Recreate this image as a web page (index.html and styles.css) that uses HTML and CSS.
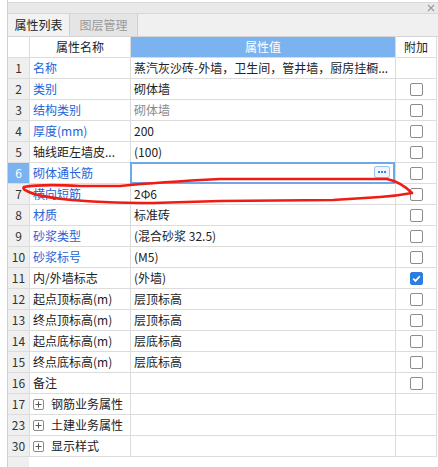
FILE: index.html
```html
<!DOCTYPE html>
<html lang="zh-CN">

<head>
  <meta charset="UTF-8">
  <meta name="viewport" content="width=device-width, initial-scale=1.0">
  <title>属性列表</title>
  <link rel="stylesheet" href="styles.css">
</head>

<body>

  <div class="panel">
    <!-- Title strip -->
    <div class="titlebar">
      <svg class="close" width="8" height="8" viewBox="0 0 8 8">
        <path d="M1 1 L7 7 M7 1 L1 7" stroke="#9a9a9a" stroke-width="1.1" fill="none" />
      </svg>
    </div>

    <!-- Tabs -->
    <div class="tabs">
      <div class="tab active">属性列表</div>
      <div class="tab second">图层管理</div>
    </div>

    <!-- Property grid -->
    <div class="grid-wrap">
      <table class="props">
        <colgroup>
          <col class="c-num">
          <col class="c-name">
          <col class="c-value">
          <col class="c-add">
        </colgroup>
        <thead>
          <tr>
            <th class="num head-num"></th>
            <th class="name-head">属性名称</th>
            <th class="value-head">属性值</th>
            <th class="add-head">附加</th>
          </tr>
        </thead>
        <tbody>
          <tr>
            <td class="num">1</td>
            <td class="key">名称</td>
            <td>蒸汽灰沙砖-外墙，卫生间，管井墙，厨房挂橱...</td>
            <td class="add"></td>
          </tr>
          <tr>
            <td class="num">2</td>
            <td class="key">类别</td>
            <td>砌体墙</td>
            <td class="add"><span class="box"></span></td>
          </tr>
          <tr>
            <td class="num">3</td>
            <td class="key">结构类别</td>
            <td class="muted">砌体墙</td>
            <td class="add"><span class="box"></span></td>
          </tr>
          <tr>
            <td class="num">4</td>
            <td class="key">厚度(mm)</td>
            <td>200</td>
            <td class="add"><span class="box"></span></td>
          </tr>
          <tr>
            <td class="num">5</td>
            <td>轴线距左墙皮...</td>
            <td>(100)</td>
            <td class="add"><span class="box"></span></td>
          </tr>
          <tr>
            <td class="num selected">6</td>
            <td class="key">砌体通长筋</td>
            <td class="editing">
              <span class="dots">
                <svg width="14" height="10" viewBox="0 0 14 10">
                  <rect x="3" y="4" width="2" height="2" fill="#3a84e0" />
                  <rect x="6" y="4" width="2" height="2" fill="#3a84e0" />
                  <rect x="9" y="4" width="2" height="2" fill="#3a84e0" />
                </svg>
              </span>
            </td>
            <td class="add"><span class="box"></span></td>
          </tr>
          <tr>
            <td class="num">7</td>
            <td class="key">横向短筋</td>
            <td>2Φ6</td>
            <td class="add"><span class="box"></span></td>
          </tr>
          <tr>
            <td class="num">8</td>
            <td class="key">材质</td>
            <td>标准砖</td>
            <td class="add"><span class="box"></span></td>
          </tr>
          <tr>
            <td class="num">9</td>
            <td class="key">砂浆类型</td>
            <td class="pre">(混合砂浆   32.5)</td>
            <td class="add"><span class="box"></span></td>
          </tr>
          <tr>
            <td class="num">10</td>
            <td class="key">砂浆标号</td>
            <td>(M5)</td>
            <td class="add"><span class="box"></span></td>
          </tr>
          <tr>
            <td class="num">11</td>
            <td>内/外墙标志</td>
            <td>(外墙)</td>
            <td class="add">
              <span class="box checked">
                <svg width="11" height="11" viewBox="0 0 11 11">
                  <path d="M2.2 5.6 L4.5 7.9 L8.8 3.2" stroke="#fff" stroke-width="1.7" fill="none" />
                </svg>
              </span>
            </td>
          </tr>
          <tr>
            <td class="num">12</td>
            <td>起点顶标高(m)</td>
            <td>层顶标高</td>
            <td class="add"><span class="box"></span></td>
          </tr>
          <tr>
            <td class="num">13</td>
            <td>终点顶标高(m)</td>
            <td>层顶标高</td>
            <td class="add"><span class="box"></span></td>
          </tr>
          <tr>
            <td class="num">14</td>
            <td>起点底标高(m)</td>
            <td>层底标高</td>
            <td class="add"><span class="box"></span></td>
          </tr>
          <tr>
            <td class="num">15</td>
            <td>终点底标高(m)</td>
            <td>层底标高</td>
            <td class="add"><span class="box"></span></td>
          </tr>
          <tr>
            <td class="num">16</td>
            <td>备注</td>
            <td></td>
            <td class="add"><span class="box"></span></td>
          </tr>
          <tr>
            <td class="num">17</td>
            <td class="group"><span class="expander"><svg width="9" height="9" viewBox="0 0 9 9"><path d="M4.5 1.5 V7.5 M1.5 4.5 H7.5" stroke="#555" stroke-width="1" fill="none" /></svg></span>钢筋业务属性</td>
            <td></td>
            <td class="add"></td>
          </tr>
          <tr>
            <td class="num">23</td>
            <td class="group"><span class="expander"><svg width="9" height="9" viewBox="0 0 9 9"><path d="M4.5 1.5 V7.5 M1.5 4.5 H7.5" stroke="#555" stroke-width="1" fill="none" /></svg></span>土建业务属性</td>
            <td></td>
            <td class="add"></td>
          </tr>
          <tr>
            <td class="num">30</td>
            <td class="group"><span class="expander"><svg width="9" height="9" viewBox="0 0 9 9"><path d="M4.5 1.5 V7.5 M1.5 4.5 H7.5" stroke="#555" stroke-width="1" fill="none" /></svg></span>显示样式</td>
            <td></td>
            <td class="add"></td>
          </tr>
        </tbody>
      </table>
    </div>
  </div>

  <!-- Hand-drawn red mark over row 7 -->
  <svg class="markup" width="438" height="467" viewBox="0 0 438 467">
    <path d="M27 191 Q22 189 24 187 Q40 184 80 186 L120 186 Q160 182 220 179 L387 179 Q401 182 412 193 Q396 196 380 197 L333 200 L220 201 L153 203 Q100 203 62 199 Q36 196 27 191 Z"
      stroke="#f01c14" stroke-width="2.7" fill="none" stroke-linejoin="round" />
  </svg>

</body>

</html>
```

FILE: styles.css
```css
body {
  margin: 0;
  width: 438px;
  height: 467px;
  overflow: hidden;
  position: relative;
  background: #fff;
  font-family: "Noto Sans CJK SC", "Microsoft YaHei", sans-serif;
  font-size: 12px;
  color: #222;
}

.panel {
  margin-left: 7px;
  height: 467px;
  border-left: 1px solid #d0d0d0;
  display: flex;
  flex-direction: column;
}

.titlebar {
  margin-top: 2px;
  height: 10px;
  border-top: 1px solid #d8d8d8;
  border-bottom: 1px solid #d8d8d8;
  background: #e9e9e9;
  display: flex;
  justify-content: flex-end;
  align-items: center;
  padding-right: 3px;
}

.tabs {
  height: 22px;
  background: #f0f0f0;
  border-bottom: 1px solid #d6d6d6;
  display: flex;
}

.tab {
  width: 61px;
  line-height: 22px;
  text-align: center;
  border-right: 1px solid #cfcfcf;
  background: #e5e5e5;
  color: #9a9a9a;
}

.tab.active {
  background: #f2f2f2;
  color: #222;
}

.tab.second {
  width: 67px;
}

.grid-wrap {
  flex: 1;
  background: linear-gradient(to right, #efefef 21px, #fff 21px);
}

.props {
  table-layout: fixed;
  border-collapse: separate;
  border-spacing: 0;
  width: 429px;
}

.c-num {
  width: 22px;
}

.c-name {
  width: 101px;
}

.c-value {
  width: 265px;
}

.c-add {
  width: 41px;
}

.props th,
.props td {
  box-sizing: border-box;
  height: 21px;
  padding: 0 3px;
  border-right: 1px solid #dcdcdc;
  border-bottom: 1px solid #dcdcdc;
  white-space: nowrap;
  overflow: hidden;
  font-weight: normal;
  text-align: left;
  line-height: 20px;
  background: #fff;
}

.props .num {
  padding: 0;
  text-align: center;
  background: #efefef;
  color: #333;
}

.props .head-num {
  background: #fff;
}

.props .name-head,
.props .add-head {
  text-align: center;
  padding: 0;
}

.props .value-head {
  text-align: center;
  background: #7ab3f0;
  color: #fff;
}

.props .num.selected {
  background: #7ab3f0;
  color: #fff;
}

.key {
  color: #2463d8;
}

.muted {
  color: #888;
}

.pre {
  white-space: pre;
}

.editing {
  position: relative;
  overflow: visible !important;
}

.editing::after {
  content: "";
  position: absolute;
  top: -1px;
  bottom: -1px;
  left: -1px;
  right: 0;
  border: 2px solid #6fa8e6;
  pointer-events: none;
}

.dots {
  position: absolute;
  right: 5px;
  top: 3px;
  width: 14px;
  height: 10px;
  border: 1px solid #9cc3ec;
  border-radius: 2px;
  background: #eef5fd;
  display: flex;
}

.props .add {
  padding: 0;
  text-align: center;
}

.box {
  display: inline-block;
  box-sizing: border-box;
  width: 13px;
  height: 13px;
  border: 1px solid #8c8c8c;
  border-radius: 2px;
  vertical-align: middle;
  margin-top: -2px;
  background: #fff;
}

.box.checked {
  background: #2b7de2;
  border-color: #2b7de2;
  display: inline-flex;
  align-items: center;
  justify-content: center;
}

.group {
  display: table-cell;
}

.expander {
  display: inline-flex;
  box-sizing: border-box;
  width: 11px;
  height: 11px;
  border: 1px solid #8a8a8a;
  border-radius: 2px;
  align-items: center;
  justify-content: center;
  vertical-align: middle;
  margin-top: -2px;
  margin-right: 7px;
}

.markup {
  position: absolute;
  top: 0;
  left: 0;
  pointer-events: none;
}
```
